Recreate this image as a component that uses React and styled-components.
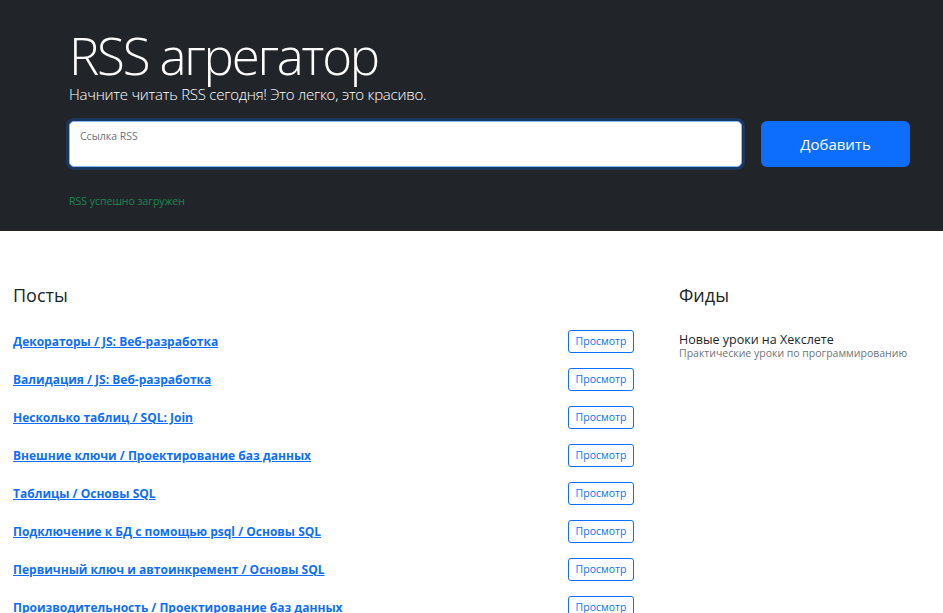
import React from 'react';
import styled, { createGlobalStyle } from 'styled-components';

const GlobalStyle = createGlobalStyle`
  body {
    margin: 0;
    font-family: 'Open Sans', 'Noto Sans', sans-serif;
    background: #fff;
    color: #212529;
  }
  *, *::before, *::after {
    box-sizing: border-box;
  }
`;

const Hero = styled.section`
  background: #212529;
  color: #fff;
  height: 231px;
  padding: 27px 33px 0 69px;
`;

const Title = styled.h1`
  margin: 0;
  font-size: 51px;
  font-weight: 300;
  line-height: 56px;
  letter-spacing: -2.2px;
`;

const Lead = styled.p`
  margin: 2px 0 17px;
  font-size: 15px;
  font-weight: 300;
  line-height: 19px;
  letter-spacing: -0.25px;
`;

const FormRow = styled.form`
  display: flex;
  gap: 19px;
  align-items: stretch;
`;

const Floating = styled.div`
  position: relative;
  flex: 1;
`;

const Input = styled.input`
  width: 100%;
  height: 46px;
  border: 1px solid #86b7fe;
  border-radius: 5px;
  box-shadow: 0 0 0 3px rgba(13, 110, 253, 0.25);
  background: #fff;
  outline: none;
  padding: 18px 10px 4px;
  font: inherit;
  font-size: 13px;
`;

const FloatLabel = styled.label`
  position: absolute;
  left: 11px;
  top: 8px;
  font-size: 10.5px;
  color: #6c757d;
  pointer-events: none;
`;

const AddButton = styled.button`
  width: 149px;
  border: none;
  border-radius: 6px;
  background: #0d6efd;
  color: #fff;
  font-family: inherit;
  font-size: 15px;
  cursor: pointer;
`;

const Feedback = styled.p`
  margin: 27px 0 0;
  font-size: 10.5px;
  color: #198754;
`;

const Main = styled.main`
  display: flex;
  padding: 52px 0 0 13px;
`;

const PostsCol = styled.section`
  width: 621px;
`;

const FeedsCol = styled.section`
  padding-left: 45px;
  flex: 1;
`;

const SectionTitle = styled.h2`
  margin: 0 0 15px;
  font-size: 18px;
  font-weight: 500;
  line-height: 24px;
`;

const PostList = styled.ul`
  list-style: none;
  margin: 0;
  padding: 0;
`;

const PostRow = styled.li`
  display: flex;
  justify-content: space-between;
  align-items: center;
  height: 38px;
`;

const PostLink = styled.a`
  color: #0d6efd;
  font-weight: 700;
  font-size: 12px;
  text-decoration: underline;
`;

const ViewButton = styled.button`
  width: 66px;
  height: 23px;
  padding: 0;
  border: 1px solid #0d6efd;
  border-radius: 3px;
  background: #fff;
  color: #0d6efd;
  font-family: inherit;
  font-size: 10.5px;
  cursor: pointer;
`;

const FeedItem = styled.div`
  padding-top: 10px;
`;

const FeedName = styled.h3`
  margin: 0;
  font-size: 12.5px;
  font-weight: 400;
  line-height: 15px;
`;

const FeedDesc = styled.p`
  margin: 0;
  font-size: 10.5px;
  color: #6c757d;
  line-height: 13px;
`;

const posts = [
  'Декораторы / JS: Веб-разработка',
  'Валидация / JS: Веб-разработка',
  'Несколько таблиц / SQL: Join',
  'Внешние ключи / Проектирование баз данных',
  'Таблицы / Основы SQL',
  'Подключение к БД с помощью psql / Основы SQL',
  'Первичный ключ и автоинкремент / Основы SQL',
  'Производительность / Проектирование баз данных',
  'Индексы / Проектирование баз данных',
];

export default function App() {
  return (
    <div>
      <GlobalStyle />
      <Hero>
        <Title>RSS агрегатор</Title>
        <Lead>Начните читать RSS сегодня! Это легко, это красиво.</Lead>
        <FormRow onSubmit={e => e.preventDefault()}>
          <Floating>
            <Input id="url-input" aria-label="url" />
            <FloatLabel htmlFor="url-input">Ссылка RSS</FloatLabel>
          </Floating>
          <AddButton type="submit">Добавить</AddButton>
        </FormRow>
        <Feedback>RSS успешно загружен</Feedback>
      </Hero>
      <Main>
        <PostsCol>
          <SectionTitle>Посты</SectionTitle>
          <PostList>
            {posts.map(title => (
              <PostRow key={title}>
                <PostLink href="#">{title}</PostLink>
                <ViewButton>Просмотр</ViewButton>
              </PostRow>
            ))}
          </PostList>
        </PostsCol>
        <FeedsCol>
          <SectionTitle>Фиды</SectionTitle>
          <FeedItem>
            <FeedName>Новые уроки на Хекслете</FeedName>
            <FeedDesc>Практические уроки по программированию</FeedDesc>
          </FeedItem>
        </FeedsCol>
      </Main>
    </div>
  );
}
